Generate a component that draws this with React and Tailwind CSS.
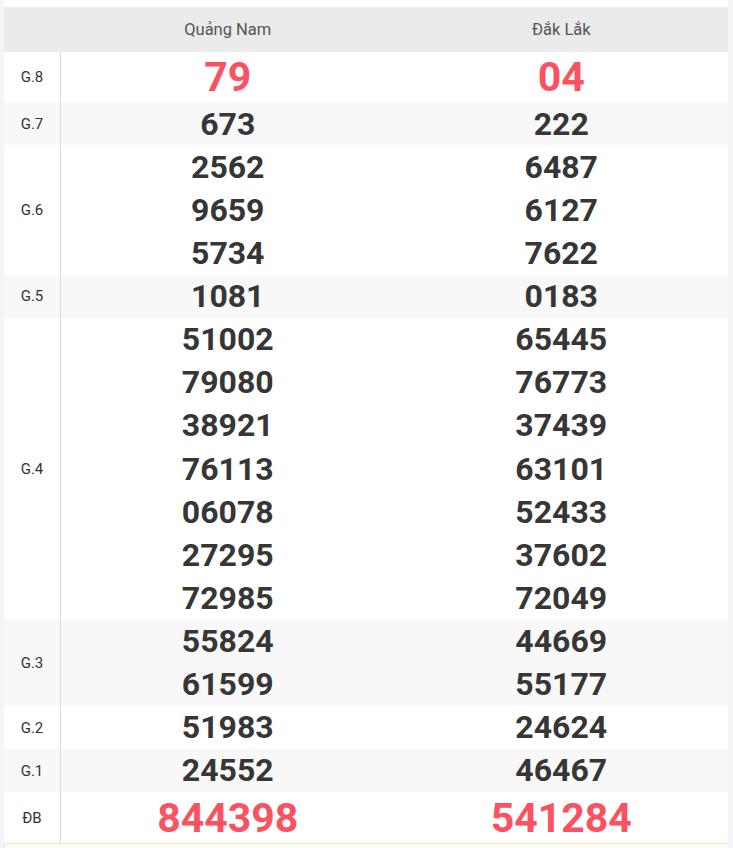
import React from 'react';

const rows = [
  { label: 'G.8', a: ['79'], b: ['04'], big: true, h: 'h-[50px]' },
  { label: 'G.7', a: ['673'], b: ['222'], alt: true },
  { label: 'G.6', a: ['2562', '9659', '5734'], b: ['6487', '6127', '7622'] },
  { label: 'G.5', a: ['1081'], b: ['0183'], alt: true },
  {
    label: 'G.4',
    a: ['51002', '79080', '38921', '76113', '06078', '27295', '72985'],
    b: ['65445', '76773', '37439', '63101', '52433', '37602', '72049'],
  },
  { label: 'G.3', a: ['55824', '61599'], b: ['44669', '55177'], alt: true },
  { label: 'G.2', a: ['51983'], b: ['24624'] },
  { label: 'G.1', a: ['24552'], b: ['46467'], alt: true },
  { label: 'ĐB', a: ['844398'], b: ['541284'], big: true, h: 'h-[51px]' },
];

const Cell = ({ nums, big, h }) => (
  <div className="flex flex-col">
    {nums.map((n, i) => (
      <div
        key={i}
        className={
          big
            ? `${h} flex items-center justify-center pt-[2px] text-[41px] font-bold text-[#fa5261]`
            : 'h-[43.125px] flex items-center justify-center text-[32px] font-bold text-[#363636]'
        }
      >
        {n}
      </div>
    ))}
  </div>
);

export default function App() {
  return (
    <div className="min-h-[848px] bg-[#f5f5f7] pl-[4px] pr-[5px]" style={{ fontFamily: 'Roboto, "Liberation Sans", sans-serif' }}>
      <div className="bg-white pt-[7px]">
        <div className="grid grid-cols-[57px_1fr_1fr] h-[45px] bg-[#ebebeb] border-t border-[#f1e8e8] text-[16.5px] text-[#555]">
          <div />
          <div className="flex items-center justify-center pt-[1px]">Quảng Nam</div>
          <div className="flex items-center justify-center pt-[1px]">Đắk Lắk</div>
        </div>
        {rows.map((r) => (
          <div
            key={r.label}
            className={`grid grid-cols-[57px_1fr_1fr] ${r.alt ? 'bg-[#f8f8f8]' : 'bg-white'}`}
          >
            <div className="flex items-center justify-center pt-[1px] border-r border-[#dddddd] text-[15px] text-[#333]">
              {r.label}
            </div>
            <Cell nums={r.a} big={r.big} h={r.h} />
            <Cell nums={r.b} big={r.big} h={r.h} />
          </div>
        ))}
        <div className="h-[20px] bg-[#fffcf6] border-t border-l border-[#f5e3cc]" />
      </div>
    </div>
  );
}
